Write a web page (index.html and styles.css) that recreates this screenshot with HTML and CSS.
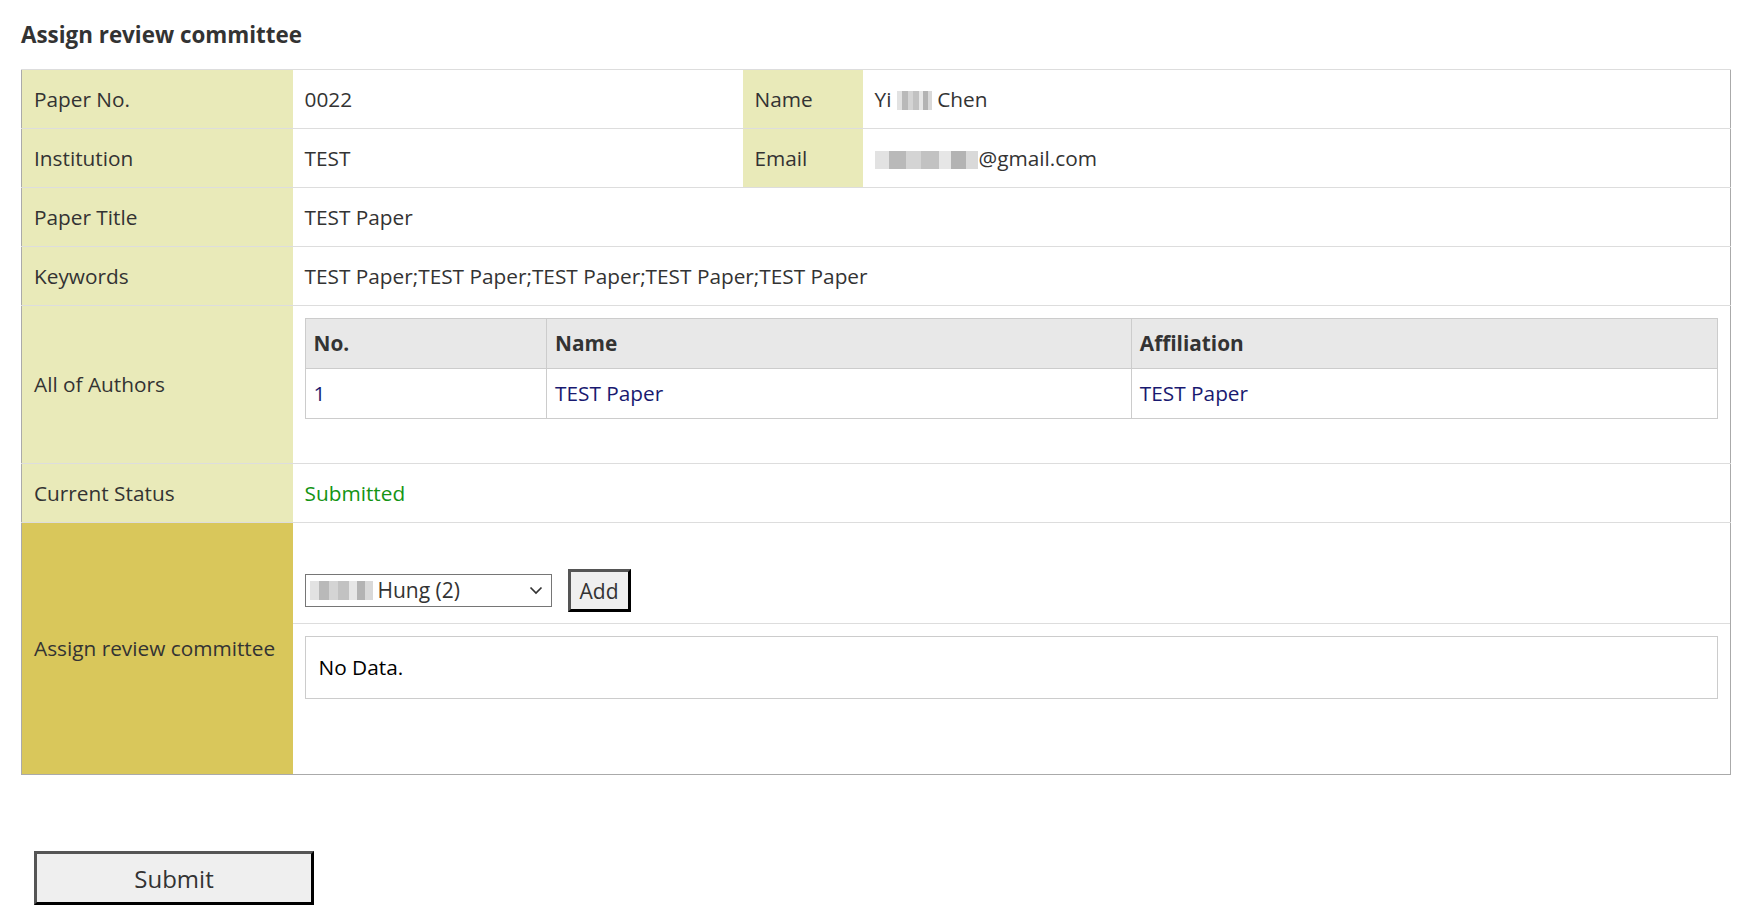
FILE: index.html
```html
<!DOCTYPE html>
<html lang="en">
<head>
    <meta charset="UTF-8">
    <meta name="viewport" content="width=device-width, initial-scale=1.0">
    <title>Assign review committee</title>
    <link rel="stylesheet" href="styles.css">
</head>
<body>
    <div class="page">
        <h2 class="page-title">Assign review committee</h2>
        <table class="info-table">
            <colgroup>
                <col class="col-label">
                <col class="col-value">
                <col class="col-label2">
                <col>
            </colgroup>
            <tr>
                <td class="label">Paper No.</td>
                <td>0022</td>
                <td class="label">Name</td>
                <td>Yi <span class="blur blur-name"></span> Chen</td>
            </tr>
            <tr>
                <td class="label">Institution</td>
                <td>TEST</td>
                <td class="label">Email</td>
                <td><span class="blur blur-mail"></span>@gmail.com</td>
            </tr>
            <tr>
                <td class="label">Paper Title</td>
                <td colspan="3">TEST Paper</td>
            </tr>
            <tr>
                <td class="label">Keywords</td>
                <td colspan="3">TEST Paper;TEST Paper;TEST Paper;TEST Paper;TEST Paper</td>
            </tr>
            <tr>
                <td class="label">All of Authors</td>
                <td colspan="3" class="authors-cell">
                    <table class="authors-table">
                        <tr>
                            <th class="col-no">No.</th>
                            <th class="col-name">Name</th>
                            <th>Affiliation</th>
                        </tr>
                        <tr>
                            <td>1</td>
                            <td>TEST Paper</td>
                            <td>TEST Paper</td>
                        </tr>
                    </table>
                </td>
            </tr>
            <tr>
                <td class="label">Current Status</td>
                <td colspan="3" class="status">Submitted</td>
            </tr>
            <tr>
                <td class="label label-dark">Assign review committee</td>
                <td colspan="3" class="assign-cell">
                    <table class="assign-table">
                        <tr>
                            <td class="assign-controls">
                                <div class="fake-select">
                                    <span class="blur blur-select"></span>
                                    <span class="select-text">Hung (2)</span>
                                    <svg class="chevron" width="14" height="9" viewBox="0 0 14 9">
                                        <path d="M1.5 1.5 L7 7 L12.5 1.5" fill="none" stroke="#333" stroke-width="1.7"/>
                                    </svg>
                                </div>
                                <button class="add-button">Add</button>
                            </td>
                        </tr>
                        <tr>
                            <td class="assign-list">
                                <div class="no-data">No Data.</div>
                            </td>
                        </tr>
                    </table>
                </td>
            </tr>
        </table>
        <div class="actions">
            <button class="submit-button">Submit</button>
        </div>
    </div>
</body>
</html>
```

FILE: styles.css
```css
body {
    font-family: "Open Sans", "Liberation Sans", sans-serif;
    margin: 0;
    padding: 0;
    color: #333;
    background-color: #fff;
}
.page {
    padding: 0 16px 0 21px;
}
.page-title {
    font-size: 22.4px;
    font-weight: bold;
    line-height: 30px;
    margin: 20px 0 19px;
}
.info-table {
    width: 1710px;
    border-collapse: collapse;
    border: 1px solid #aaa;
    font-size: 20.8px;
    line-height: 27px;
}
.col-label {
    width: 271px;
}
.col-value {
    width: 450px;
}
.col-label2 {
    width: 120px;
}
.info-table > tbody > tr > td {
    border-top: 1px solid #ddd;
    padding: 0 12px;
    height: 58px;
    vertical-align: middle;
}
.info-table td.label {
    background-color: #e9eab9;
}
.info-table td.label-dark {
    background-color: #d9c75b;
}
.blur {
    display: inline-block;
    vertical-align: middle;
    background: linear-gradient(90deg, #e2e2e2 0 14%, #b9b9b9 14% 30%, #d4d4d4 30% 45%, #c2c2c2 45% 62%, #e6e6e6 62% 74%, #b3b3b3 74% 88%, #d9d9d9 88%);
}
.blur-name {
    width: 35px;
    height: 19px;
}
.blur-mail {
    width: 103px;
    height: 18px;
    margin-right: 1px;
}
.blur-select {
    width: 63px;
    height: 19px;
    margin-right: 5px;
}
/* authors */
.info-table td.authors-cell {
    padding: 12px 12px 44px;
}
.authors-table {
    width: 100%;
    border-collapse: collapse;
    border: 1px solid #ccc;
}
.authors-table th,
.authors-table td {
    border: 1px solid #ccc;
    padding: 11px 8px 11px;
    text-align: left;
}
.authors-table th {
    background-color: #e8e8e8;
    font-weight: bold;
    color: #333;
}
.authors-table td {
    color: #191970;
}
.col-no {
    width: 17.1%;
}
.col-name {
    width: 41.4%;
}
.status {
    color: #149414;
}
/* assign */
.info-table td.assign-cell {
    padding: 0;
    vertical-align: top;
}
.assign-table {
    width: 100%;
    border-collapse: collapse;
}
.assign-controls {
    padding: 46px 12px 11px;
    display: flex;
    align-items: center;
}
.assign-list {
    border-top: 1px solid #ddd;
    padding: 12px 12px 75px;
}
.fake-select {
    display: flex;
    align-items: center;
    box-sizing: border-box;
    width: 247px;
    height: 33px;
    padding: 0 8px 0 4px;
    border: 1px solid #767676;
    font-size: 21px;
    color: #333;
}
.select-text {
    flex-grow: 1;
}
.add-button,
.submit-button {
    font-family: "Open Sans", "Liberation Sans", sans-serif;
    background-color: #efefef;
    border: 3px solid;
    border-color: #555 #000 #000 #555;
    color: #333;
    padding: 0;
    cursor: pointer;
}
.add-button {
    margin-left: 16px;
    width: 63px;
    height: 43px;
    font-size: 21px;
}
.no-data {
    border: 1px solid #ccc;
    padding: 17px 13px;
    color: #000;
    font-size: 20.8px;
}
.actions {
    padding-left: 13px;
    margin-top: 76px;
}
.submit-button {
    width: 280px;
    height: 54px;
    font-size: 24px;
}
```
